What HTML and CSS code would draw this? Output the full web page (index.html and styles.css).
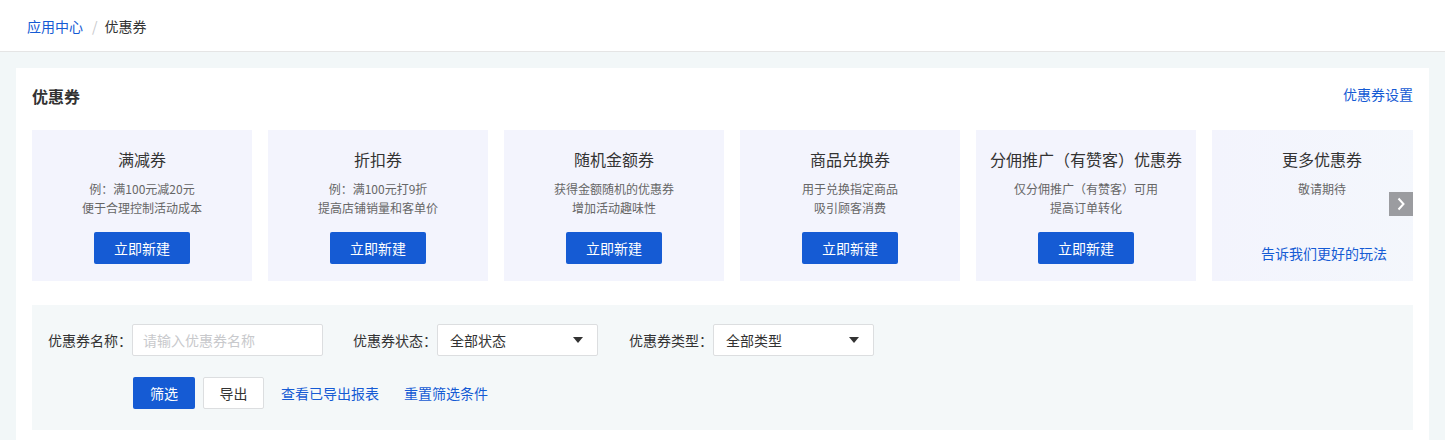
FILE: index.html
```html
<!DOCTYPE html>
<html lang="zh-CN">
<head>
    <meta charset="UTF-8">
    <title>优惠券</title>
    <link rel="stylesheet" href="styles.css">
</head>
<body>
    <div class="header">
        <a class="crumb-link" href="#">应用中心</a>
        <span class="crumb-sep">/</span>
        <span class="crumb-current">优惠券</span>
    </div>

    <div class="main">
        <div class="panel">
            <div class="panel-head">
                <h2>优惠券</h2>
                <a class="link" href="#">优惠券设置</a>
            </div>

            <div class="slider">
                <div class="cards">
                    <div class="card">
                        <h3>满减券</h3>
                        <p>例：满100元减20元<br>便于合理控制活动成本</p>
                        <button class="btn-primary">立即新建</button>
                    </div>
                    <div class="card">
                        <h3>折扣券</h3>
                        <p>例：满100元打9折<br>提高店铺销量和客单价</p>
                        <button class="btn-primary">立即新建</button>
                    </div>
                    <div class="card">
                        <h3>随机金额券</h3>
                        <p>获得金额随机的优惠券<br>增加活动趣味性</p>
                        <button class="btn-primary">立即新建</button>
                    </div>
                    <div class="card">
                        <h3>商品兑换券</h3>
                        <p>用于兑换指定商品<br>吸引顾客消费</p>
                        <button class="btn-primary">立即新建</button>
                    </div>
                    <div class="card">
                        <h3>分佣推广（有赞客）优惠券</h3>
                        <p>仅分佣推广（有赞客）可用<br>提高订单转化</p>
                        <button class="btn-primary">立即新建</button>
                    </div>
                    <div class="card card-more">
                        <h3>更多优惠券</h3>
                        <p>敬请期待</p>
                        <a class="link more-link" href="#">告诉我们更好的玩法</a>
                    </div>
                </div>
                <div class="next">
                    <svg width="12" height="14" viewBox="0 0 12 14"><path d="M3.5 1.5 L8.5 7 L3.5 12.5" fill="none" stroke="#fff" stroke-width="2"/></svg>
                </div>
            </div>

            <div class="filter">
                <div class="filter-row">
                    <label class="field">
                        <span class="field-label">优惠券名称：</span>
                        <input class="input" type="text" placeholder="请输入优惠券名称">
                    </label>
                    <div class="field">
                        <span class="field-label">优惠券状态：</span>
                        <div class="select">全部状态<span class="caret"></span></div>
                    </div>
                    <div class="field">
                        <span class="field-label">优惠券类型：</span>
                        <div class="select">全部类型<span class="caret"></span></div>
                    </div>
                </div>
                <div class="actions">
                    <button class="btn-primary btn-small">筛选</button>
                    <button class="btn-default">导出</button>
                    <a class="link" href="#">查看已导出报表</a>
                    <a class="link" href="#">重置筛选条件</a>
                </div>
            </div>
        </div>
    </div>
</body>
</html>
```

FILE: styles.css
```css
* {
    margin: 0;
    padding: 0;
    box-sizing: border-box;
}

body {
    font-family: "Noto Sans CJK SC", "Liberation Sans", sans-serif;
    font-size: 14px;
    color: #333;
    background: #f2f7f8;
    height: 440px;
    overflow: hidden;
}

a {
    text-decoration: none;
}

.link {
    color: #155bd4;
    font-size: 14px;
}

.header {
    height: 52px;
    background: #fff;
    border-bottom: 1px solid #e5e5e5;
    display: flex;
    align-items: center;
    padding-left: 27px;
    font-size: 14px;
}

.crumb-link {
    color: #155bd4;
}

.crumb-sep {
    color: #c8c9cc;
    margin: 0 7px 0 9px;
}

.crumb-current {
    color: #333;
}

.main {
    padding: 16px 16px 0;
}

.panel {
    background: #fff;
    padding: 0 16px 16px;
}

.panel-head {
    height: 62px;
    display: flex;
    align-items: flex-start;
    justify-content: space-between;
    padding-top: 16px;
}

.panel-head h2 {
    font-size: 16px;
    font-weight: bold;
    color: #333;
    line-height: 22px;
    margin-top: 1px;
}

.panel-head .link {
    line-height: 20px;
}

.slider {
    position: relative;
    overflow: hidden;
}

.cards {
    display: flex;
    gap: 16px;
}

.card {
    flex: 0 0 220px;
    height: 151px;
    background: #f3f4fd;
    display: flex;
    flex-direction: column;
    align-items: center;
    padding-top: 18px;
    text-align: center;
}

.card h3 {
    font-size: 16px;
    font-weight: normal;
    color: #333;
    line-height: 22px;
}

.card p {
    font-size: 12px;
    color: #666;
    line-height: 19px;
    margin-top: 9px;
    height: 38px;
}

.card .btn-primary {
    margin-top: 15px;
}

.card-more {
    background: linear-gradient(90deg, #f3f4fd 0%, #f4f7fc 100%);
}

.more-link {
    margin-top: 26px;
    font-size: 14px;
    line-height: 20px;
    padding-left: 4px;
}

.next {
    position: absolute;
    right: 0;
    top: 62px;
    width: 24px;
    height: 24px;
    background: #9b9ca0;
    display: flex;
    align-items: center;
    justify-content: center;
}

.btn-primary {
    width: 96px;
    height: 32px;
    background: #155bd4;
    color: #fff;
    border: none;
    border-radius: 2px;
    font-family: inherit;
    font-size: 14px;
}

.btn-small {
    width: 62px;
}

.btn-default {
    width: 61px;
    height: 32px;
    background: #fff;
    color: #333;
    border: 1px solid #dcdee0;
    border-radius: 2px;
    font-family: inherit;
    font-size: 14px;
}

.filter {
    margin-top: 24px;
    background: #f4f8f9;
    padding: 19px 16px 20px;
    height: 125px;
}

.filter-row {
    display: flex;
    align-items: center;
}

.field {
    display: flex;
    align-items: center;
    margin-right: 30px;
}

.field + .field {
    margin-right: 31px;
}

.field-label {
    color: #333;
    font-size: 14px;
    width: 84px;
}

.input {
    width: 191px;
    height: 32px;
    border: 1px solid #dcdee0;
    border-radius: 2px;
    background: #fff;
    padding: 0 10px;
    font-family: inherit;
    font-size: 14px;
    outline: none;
}

.input::placeholder {
    color: #c8c9cc;
}

.select {
    width: 161px;
    height: 32px;
    border: 1px solid #dcdee0;
    border-radius: 2px;
    background: #fff;
    padding: 0 12px;
    display: flex;
    align-items: center;
    justify-content: space-between;
    color: #333;
    font-size: 14px;
}

.caret {
    width: 0;
    height: 0;
    border-left: 5px solid transparent;
    border-right: 5px solid transparent;
    border-top: 6px solid #333;
    margin-right: 2px;
}

.actions {
    display: flex;
    align-items: center;
    gap: 8px;
    margin-top: 21px;
    padding-left: 85px;
}

.actions .link {
    margin-left: 9px;
    margin-right: 8px;
}
```
